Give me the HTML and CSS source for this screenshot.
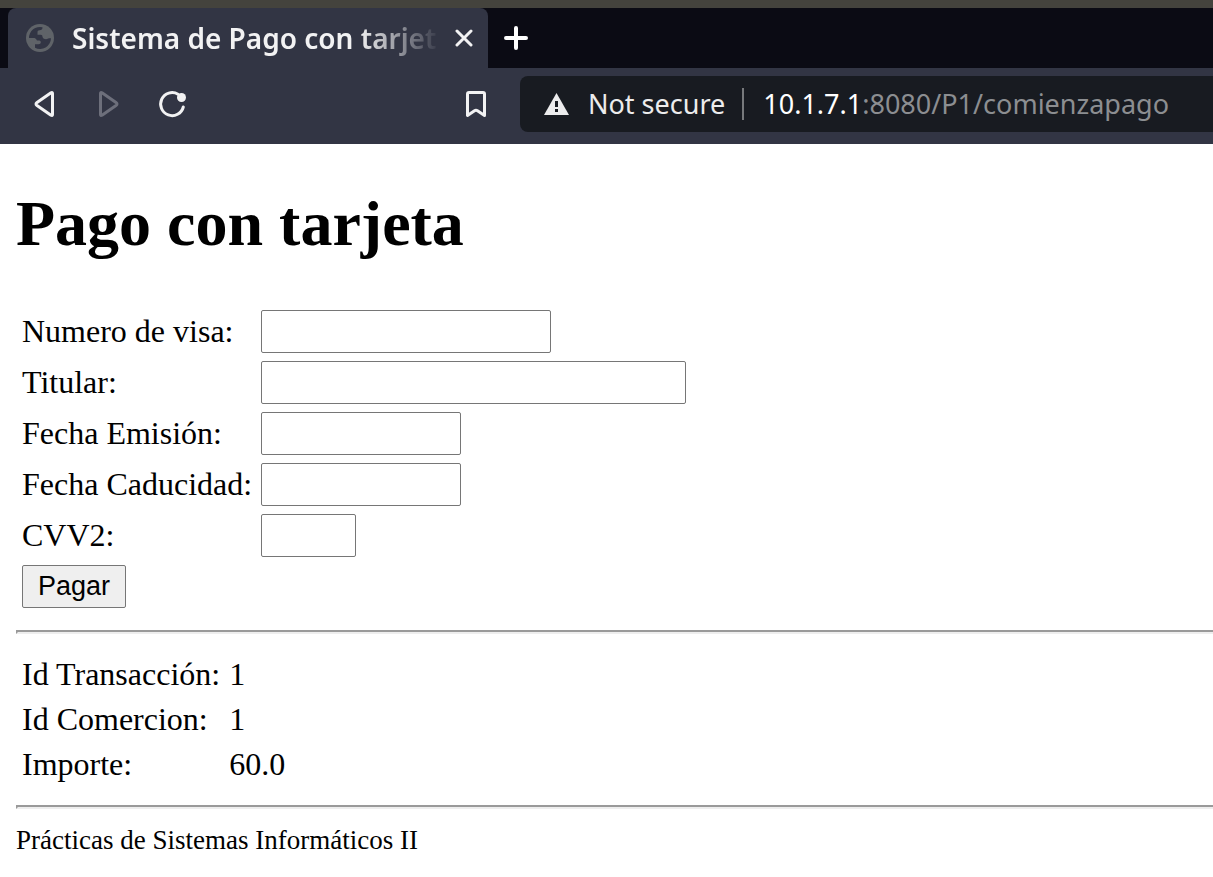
FILE: index.html
```html
<!DOCTYPE html>
<html lang="es">
<head>
<meta charset="utf-8">
<meta name="viewport" content="width=device-width, initial-scale=1">
<title>Sistema de Pago con tarjeta</title>
<link rel="stylesheet" href="styles.css">
</head>
<body>
<header class="browser">
  <div class="tab-strip">
    <div class="tab">
      <svg class="tab-globe" viewBox="0 0 28 28" aria-hidden="true">
        <circle cx="14" cy="14" r="14" fill="#5f6368"/>
        <path d="M3 14A11 11 0 0 1 16.500 3.200C16.500 5.500 15.500 6.200 13.500 6.200C12 6.200 11.500 7 11.500 8.500V10.800H14.500C16 10.800 16.500 11.500 16.500 13C17 14.800 18.500 15.200 20 15.200C21.500 15.200 22 14.300 23 14.300H25A11 11 0 0 1 9 23.800V20.200H12.500C14 20.200 14.800 19.500 14.800 18.200C14.800 17 14 16.500 12.500 16.500H11C10 14.500 9 14 7.500 14Z" fill="#323544"/>
      </svg>
      <span class="tab-title">Sistema de Pago con tarjet</span>
      <button class="icon-button tab-close" type="button" aria-label="Close tab">
        <svg width="18" height="18" viewBox="0 0 18 18" aria-hidden="true"><path d="M2 2L16 16M16 2L2 16" stroke="#f2f2f3" stroke-width="3" stroke-linecap="round"/></svg>
      </button>
    </div>
    <button class="icon-button new-tab" type="button" aria-label="New tab">
      <svg width="24" height="24" viewBox="0 0 24 24" aria-hidden="true"><path d="M12 2V22M2 12H22" stroke="#fff" stroke-width="4" stroke-linecap="round"/></svg>
    </button>
  </div>
  <div class="toolbar">
    <div class="nav">
      <button class="icon-button" type="button" aria-label="Back">
        <svg width="32" height="32" viewBox="0 0 32 32" aria-hidden="true"><path d="M23 4.800L9 14.500Q7 16 9 17.500L23 27.200Q24.500 28 24.500 26.500V5.500Q24.500 4 23 4.800Z" fill="none" stroke="#f2f2f3" stroke-width="3" stroke-linejoin="round"/></svg>
      </button>
      <button class="icon-button" type="button" aria-label="Forward" disabled>
        <svg width="32" height="32" viewBox="0 0 32 32" aria-hidden="true"><path d="M10 4.800L24 14.500Q26 16 24 17.500L10 27.200Q8.500 28 8.500 26.500V5.500Q8.500 4 10 4.800Z" fill="none" stroke="#6d6f7b" stroke-width="3" stroke-linejoin="round"/></svg>
      </button>
      <button class="icon-button" type="button" aria-label="Reload">
        <svg width="32" height="32" viewBox="0 0 32 32" aria-hidden="true"><path d="M22 6.200A11.500 11.500 0 1 0 27.300 19" fill="none" stroke="#f2f2f3" stroke-width="3" stroke-linecap="round"/><circle cx="25.500" cy="9.500" r="4.500" fill="#f2f2f3"/></svg>
      </button>
    </div>
    <button class="icon-button bookmark" type="button" aria-label="Bookmark this page">
      <svg width="32" height="32" viewBox="0 0 32 32" aria-hidden="true"><path d="M9 4.500H23Q24.500 4.500 24.500 6V27.500L17.500 22.800Q16 21.800 14.500 22.800L7.500 27.500V6Q7.500 4.500 9 4.500Z" fill="none" stroke="#f2f2f3" stroke-width="3" stroke-linejoin="round"/></svg>
    </button>
    <div class="address">
      <button class="security" type="button">
        <svg width="25" height="22" viewBox="0 0 25 22" aria-hidden="true"><path d="M12.500 0L25 22H0Z" fill="#ececed"/><path d="M11 8H14V14H11ZM11 16H14V19H11Z" fill="#181b21"/></svg>
        <span>Not secure</span>
      </button>
      <div class="url" role="textbox" contenteditable="true" spellcheck="false" aria-label="Address"><span class="url-host">10.1.7.1</span>:8080/P1/comienzapago</div>
    </div>
  </div>
</header>
<main class="page">
  <h1>Pago con tarjeta</h1>
  <form>
    <table>
      <tr><td><label for="numero">Numero de visa:</label></td><td><input class="field-number" id="numero" name="numero" type="text"></td></tr>
      <tr><td><label for="titular">Titular:</label></td><td><input class="field-holder" id="titular" name="titular" type="text"></td></tr>
      <tr><td><label for="emision">Fecha Emisión:</label></td><td><input class="field-date" id="emision" name="emision" type="text"></td></tr>
      <tr><td><label for="caducidad">Fecha Caducidad:</label></td><td><input class="field-date" id="caducidad" name="caducidad" type="text"></td></tr>
      <tr><td><label for="cvv">CVV2:</label></td><td><input class="field-cvv" id="cvv" name="cvv" type="text"></td></tr>
      <tr><td><button class="submit" type="submit">Pagar</button></td></tr>
    </table>
  </form>
  <hr>
  <table>
    <tr><td>Id Transacción:</td><td>1</td></tr>
    <tr><td>Id Comercion:</td><td>1</td></tr>
    <tr><td>Importe:</td><td>60.0</td></tr>
  </table>
  <hr>
  <footer>Prácticas de Sistemas Informáticos II</footer>
</main>
</body>
</html>
```
FILE: styles.css
```css
* {
  box-sizing: border-box;
}

body {
  margin: 0;
  background: #fff;
  color: #000;
  font-family: "Liberation Serif", serif;
  font-size: 32px;
  overflow-x: hidden;
}

.browser {
  border-top: 8px solid #44433d;
  background: #323544;
  color: #f2f2f3;
  font-family: "Noto Sans", sans-serif;
  font-size: 27px;
}

.icon-button {
  display: flex;
  flex: none;
  padding: 0;
  border: 0;
  background: none;
}

.tab-strip {
  display: flex;
  align-items: center;
  height: 60px;
  padding-left: 8px;
  background: #0b0b14;
}

.tab {
  display: flex;
  align-items: center;
  width: 480px;
  height: 60px;
  padding: 0 15px 0 18px;
  border-radius: 8px 8px 0 0;
  background: #323544;
}

.tab-globe {
  flex: none;
  width: 28px;
  height: 28px;
  margin-right: 18px;
}

.tab-title {
  flex: 1;
  min-width: 0;
  margin-right: 12px;
  font-size: 28px;
  font-weight: 600;
  line-height: 40px;
  white-space: nowrap;
  mask-image: linear-gradient(to right, #000 calc(100% - 84px), transparent calc(100% - 2px));
}

.new-tab {
  margin-left: 16px;
}

.toolbar {
  display: flex;
  align-items: center;
  height: 76px;
  padding: 8px 0 12px 28px;
}

.nav {
  display: flex;
  gap: 32px;
}

.bookmark {
  margin-left: 272px;
}

.address {
  display: flex;
  flex: 1;
  align-items: center;
  min-width: 0;
  height: 56px;
  margin-left: 28px;
  padding-left: 24px;
  border-radius: 8px 0 0 8px;
  background: #181b21;
}

.security {
  display: flex;
  flex: none;
  align-items: center;
  gap: 19px;
  height: 32px;
  padding: 0 17px 0 0;
  border: 0;
  border-right: 2px solid #77797c;
  background: none;
  color: #ececed;
  font: inherit;
  line-height: 32px;
}

.url {
  flex: 1;
  min-width: 0;
  padding-left: 19px;
  color: #8c8e91;
  line-height: 40px;
  white-space: nowrap;
  outline: 0;
}

.url-host {
  color: #fff;
}

.page {
  padding: 43px 0 20px 16px;
}

h1 {
  margin: 0 0 43px;
  font-size: 64px;
  line-height: 74px;
}

table {
  border-spacing: 4px;
  line-height: 37px;
}

td {
  padding: 2px;
}

td:first-child {
  padding-right: 3px;
}

input,
.submit {
  display: block;
  height: 43px;
  border: 1px solid #767676;
  border-radius: 2px;
  font-family: "Liberation Sans", sans-serif;
  font-size: 27px;
}

input {
  padding: 2px 4px;
  background: #fff;
}

.field-number {
  width: 290px;
}

.field-holder {
  width: 425px;
}

.field-date {
  width: 200px;
}

.field-cvv {
  width: 95px;
}

.submit {
  padding: 0 15px;
  background: #efefef;
  color: #000;
}

hr {
  height: 4px;
  margin: 16px 0;
  border: 2px solid;
  border-color: #9a9a9a transparent #eee #9a9a9a;
  border-right-width: 0;
}

footer {
  font-size: 27px;
  line-height: 30px;
}
```
